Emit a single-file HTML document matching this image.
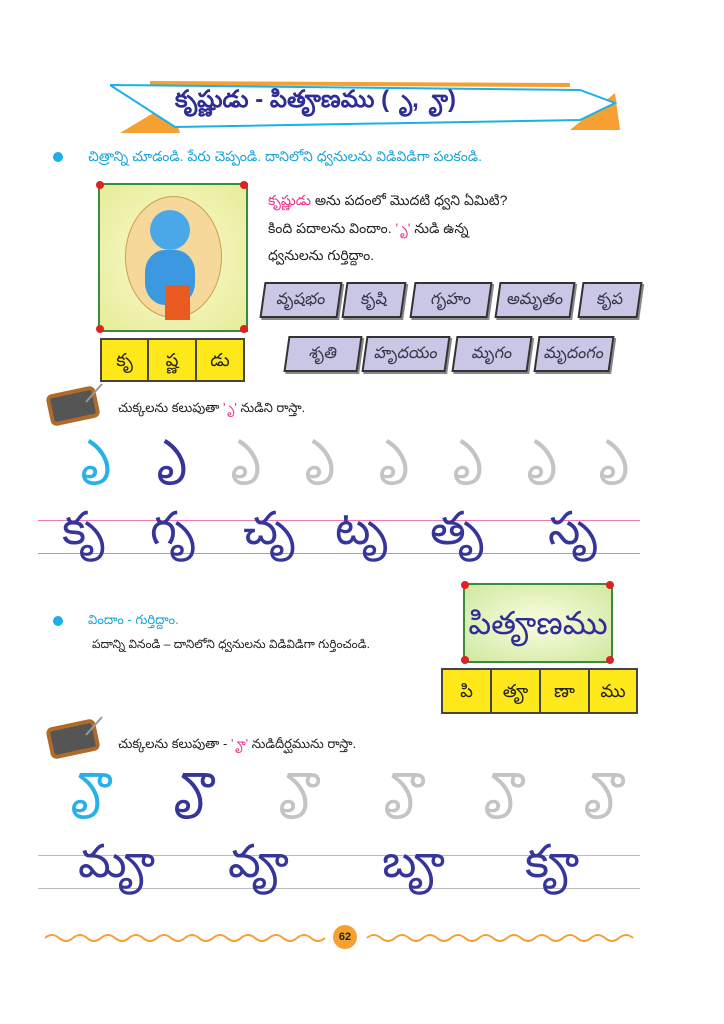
<!DOCTYPE html>
<html><head><meta charset="utf-8">
<style>
body{margin:0;width:724px;height:1024px;background:#fff;position:relative;overflow:hidden;font-family:"Liberation Sans","Noto Sans CJK SC",sans-serif;}
.a{position:absolute;white-space:nowrap;}
.dot{position:absolute;width:10px;height:10px;border-radius:50%;background:#1ab0e8;}
.cy{color:#1aa4dc;font-size:14px;}
.bk{color:#222;font-size:13px;}
.para{position:absolute;height:32px;background:#c9c6e6;border:2px solid #333;transform:skewX(-8deg);box-shadow:2px 2px 0 #888;text-align:center;line-height:32px;font-size:16px;color:#334;}
.ycells{position:absolute;display:flex;border:2px solid #444;background:#ffe81a;}
.ycells div{border-right:2px solid #444;text-align:center;font-size:18px;color:#222;}
.ycells div:last-child{border-right:none;}
.trace{position:absolute;font-size:52px;color:#35359a;line-height:1;font-weight:300;}
.dash{position:absolute;font-size:52px;color:#c4c4c4;line-height:1;}
.row2{font-size:46px;}
.pink{position:absolute;left:38px;width:602px;height:1px;background:#f07ab8;}
.gray{position:absolute;left:38px;width:602px;height:1px;background:#bbb;}
.corner{position:absolute;width:8px;height:8px;border-radius:50%;background:#d22;}
</style></head><body>

<svg class="a" style="left:110px;top:75px" width="520" height="60">
<polygon points="10,58 60,28 70,58" fill="#f5a030"/>
<polygon points="460,55 505,18 510,55" fill="#f5a030"/>
<polygon points="40,6 460,8 460,12 40,10" fill="#f5a030"/>
<polygon points="0,10 470,15 505,28 470,45 65,52" fill="#fff" stroke="#1ab0e8" stroke-width="2"/>
</svg>
<div class="a" style="left:175px;top:86px;font-size:24px;font-weight:bold;color:#2e2e96">కృష్ణుడు - పితౄణము ( &nbsp;ృ, &nbsp;ౄ)</div>

<div class="dot" style="left:53px;top:152px"></div>
<div class="a cy" style="left:88px;top:148px">చిత్రాన్ని చూడండి. పేరు చెప్పండి. దానిలోని ధ్వనులను విడివిడిగా పలకండి.</div>

<div class="a" style="left:98px;top:183px;width:146px;height:145px;border:2px solid #3c8a3c;background:radial-gradient(#fbfad0,#e7ec98);"></div>
<div class="a" style="left:125px;top:196px;width:95px;height:120px;border-radius:50%;background:#f6d89a;border:1px solid #c9a050"></div>
<div class="a" style="left:150px;top:210px;width:40px;height:40px;border-radius:50%;background:#4aa8e8"></div>
<div class="a" style="left:145px;top:250px;width:50px;height:55px;border-radius:40%;background:#3c98e0"></div>
<div class="a" style="left:165px;top:285px;width:25px;height:35px;background:#e85a20"></div>
<div class="corner" style="left:96px;top:181px"></div><div class="corner" style="left:240px;top:181px"></div>
<div class="corner" style="left:96px;top:325px"></div><div class="corner" style="left:240px;top:325px"></div>

<div class="ycells" style="left:100px;top:338px;height:40px;line-height:40px"><div style="width:45px">కృ</div><div style="width:46px">ష్ణ</div><div style="width:46px">డు</div></div>

<div class="a bk" style="left:268px;top:192px;font-size:14px"><span style="color:#e8308a">కృష్ణుడు</span> అను పదంలో మొదటి ధ్వని ఏమిటి?</div>
<div class="a bk" style="left:268px;top:220px;font-size:14px">కింది పదాలను విందాం. <span style="color:#e8308a">'&nbsp;ృ'</span> నుడి ఉన్న</div>
<div class="a bk" style="left:268px;top:247px;font-size:14px">ధ్వనులను గుర్తిద్దాం.</div>

<div class="para" style="left:262px;top:282px;width:74px">వృషభం</div>
<div class="para" style="left:344px;top:282px;width:56px">కృషి</div>
<div class="para" style="left:412px;top:282px;width:74px">గృహం</div>
<div class="para" style="left:497px;top:282px;width:72px">అమృతం</div>
<div class="para" style="left:580px;top:282px;width:56px">కృప</div>
<div class="para" style="left:286px;top:336px;width:70px">శృతి</div>
<div class="para" style="left:364px;top:336px;width:80px">హృదయం</div>
<div class="para" style="left:454px;top:336px;width:72px">మృగం</div>
<div class="para" style="left:536px;top:336px;width:72px">మృదంగం</div>

<svg class="a" style="left:46px;top:382px" width="60" height="44"><rect x="4" y="10" width="46" height="28" rx="4" fill="#555" stroke="#b06a2a" stroke-width="4" transform="rotate(-12 27 24)"/><line x1="40" y1="20" x2="56" y2="2" stroke="#999" stroke-width="2"/></svg>
<div class="a bk" style="left:118px;top:400px">చుక్కలను కలుపుతా <span style="color:#e8308a">'&nbsp;ృ'</span> నుడిని రాస్తా.</div>

<div class="trace" style="left:74px;top:422px;color:#2ab0e8">&nbsp;ృ</div>
<div class="trace" style="left:150px;top:422px">&nbsp;ృ</div>
<div class="dash" style="left:224px;top:422px">&nbsp;ృ</div>
<div class="dash" style="left:298px;top:422px">&nbsp;ృ</div>
<div class="dash" style="left:372px;top:422px">&nbsp;ృ</div>
<div class="dash" style="left:446px;top:422px">&nbsp;ృ</div>
<div class="dash" style="left:520px;top:422px">&nbsp;ృ</div>
<div class="dash" style="left:592px;top:422px">&nbsp;ృ</div>

<div class="pink" style="top:520px"></div><div class="pink" style="top:553px"></div>
<div class="trace row2" style="left:62px;top:505px">కృ</div>
<div class="trace row2" style="left:150px;top:505px">గృ</div>
<div class="trace row2" style="left:243px;top:505px">చృ</div>
<div class="trace row2" style="left:335px;top:505px">టృ</div>
<div class="trace row2" style="left:430px;top:505px">తృ</div>
<div class="trace row2" style="left:548px;top:505px">సృ</div>

<div class="dot" style="left:53px;top:616px"></div>
<div class="a cy" style="left:88px;top:612px;font-size:13px">విందాం - గుర్తిద్దాం.</div>
<div class="a bk" style="left:92px;top:637px;font-size:12px">పదాన్ని వినండి – దానిలోని ధ్వనులను విడివిడిగా గుర్తించండి.</div>

<div class="a" style="left:463px;top:583px;width:146px;height:76px;border:2px solid #3c8a3c;background:radial-gradient(#fbfde0,#cfe8a0);text-align:center;line-height:76px;font-size:32px;color:#2e2e96">పితౄణము</div>
<div class="corner" style="left:461px;top:581px"></div><div class="corner" style="left:606px;top:581px"></div>
<div class="corner" style="left:461px;top:656px"></div><div class="corner" style="left:606px;top:656px"></div>
<div class="ycells" style="left:441px;top:668px;height:42px;line-height:42px"><div style="width:47px">పి</div><div style="width:47px">తౄ</div><div style="width:47px">ణా</div><div style="width:46px">ము</div></div>

<svg class="a" style="left:46px;top:715px" width="60" height="44"><rect x="4" y="10" width="46" height="28" rx="4" fill="#555" stroke="#b06a2a" stroke-width="4" transform="rotate(-12 27 24)"/><line x1="40" y1="20" x2="56" y2="2" stroke="#999" stroke-width="2"/></svg>
<div class="a bk" style="left:118px;top:736px">చుక్కలను కలుపుతా - <span style="color:#e8308a">'&nbsp;ౄ'</span> నుడిదీర్ఘమును రాస్తా.</div>

<div class="trace" style="left:64px;top:756px;color:#2ab0e8">&nbsp;ౄ</div>
<div class="trace" style="left:167px;top:756px">&nbsp;ౄ</div>
<div class="dash" style="left:272px;top:756px">&nbsp;ౄ</div>
<div class="dash" style="left:377px;top:756px">&nbsp;ౄ</div>
<div class="dash" style="left:477px;top:756px">&nbsp;ౄ</div>
<div class="dash" style="left:577px;top:756px">&nbsp;ౄ</div>

<div class="gray" style="top:855px"></div><div class="gray" style="top:888px"></div>
<div class="trace row2" style="left:78px;top:838px">మౄ</div>
<div class="trace row2" style="left:228px;top:838px">వౄ</div>
<div class="trace row2" style="left:382px;top:838px">బౄ</div>
<div class="trace row2" style="left:525px;top:838px">కౄ</div>

<svg class="a" style="left:45px;top:928px" width="600" height="20">
<path d="M0,10 q7,-6 14,0 t14,0 t14,0 t14,0 t14,0 t14,0 t14,0 t14,0 t14,0 t14,0 t14,0 t14,0 t14,0 t14,0 t14,0 t14,0 t14,0 t14,0 t14,0 t14,0 M322,10 q7,-6 14,0 t14,0 t14,0 t14,0 t14,0 t14,0 t14,0 t14,0 t14,0 t14,0 t14,0 t14,0 t14,0 t14,0 t14,0 t14,0 t14,0 t14,0 t14,0" fill="none" stroke="#f5a030" stroke-width="2"/>
</svg>
<div class="a" style="left:333px;top:925px;width:24px;height:24px;border-radius:50%;background:#f5a030;text-align:center;line-height:24px;font-size:11px;font-weight:bold;color:#222">62</div>
</body></html>
